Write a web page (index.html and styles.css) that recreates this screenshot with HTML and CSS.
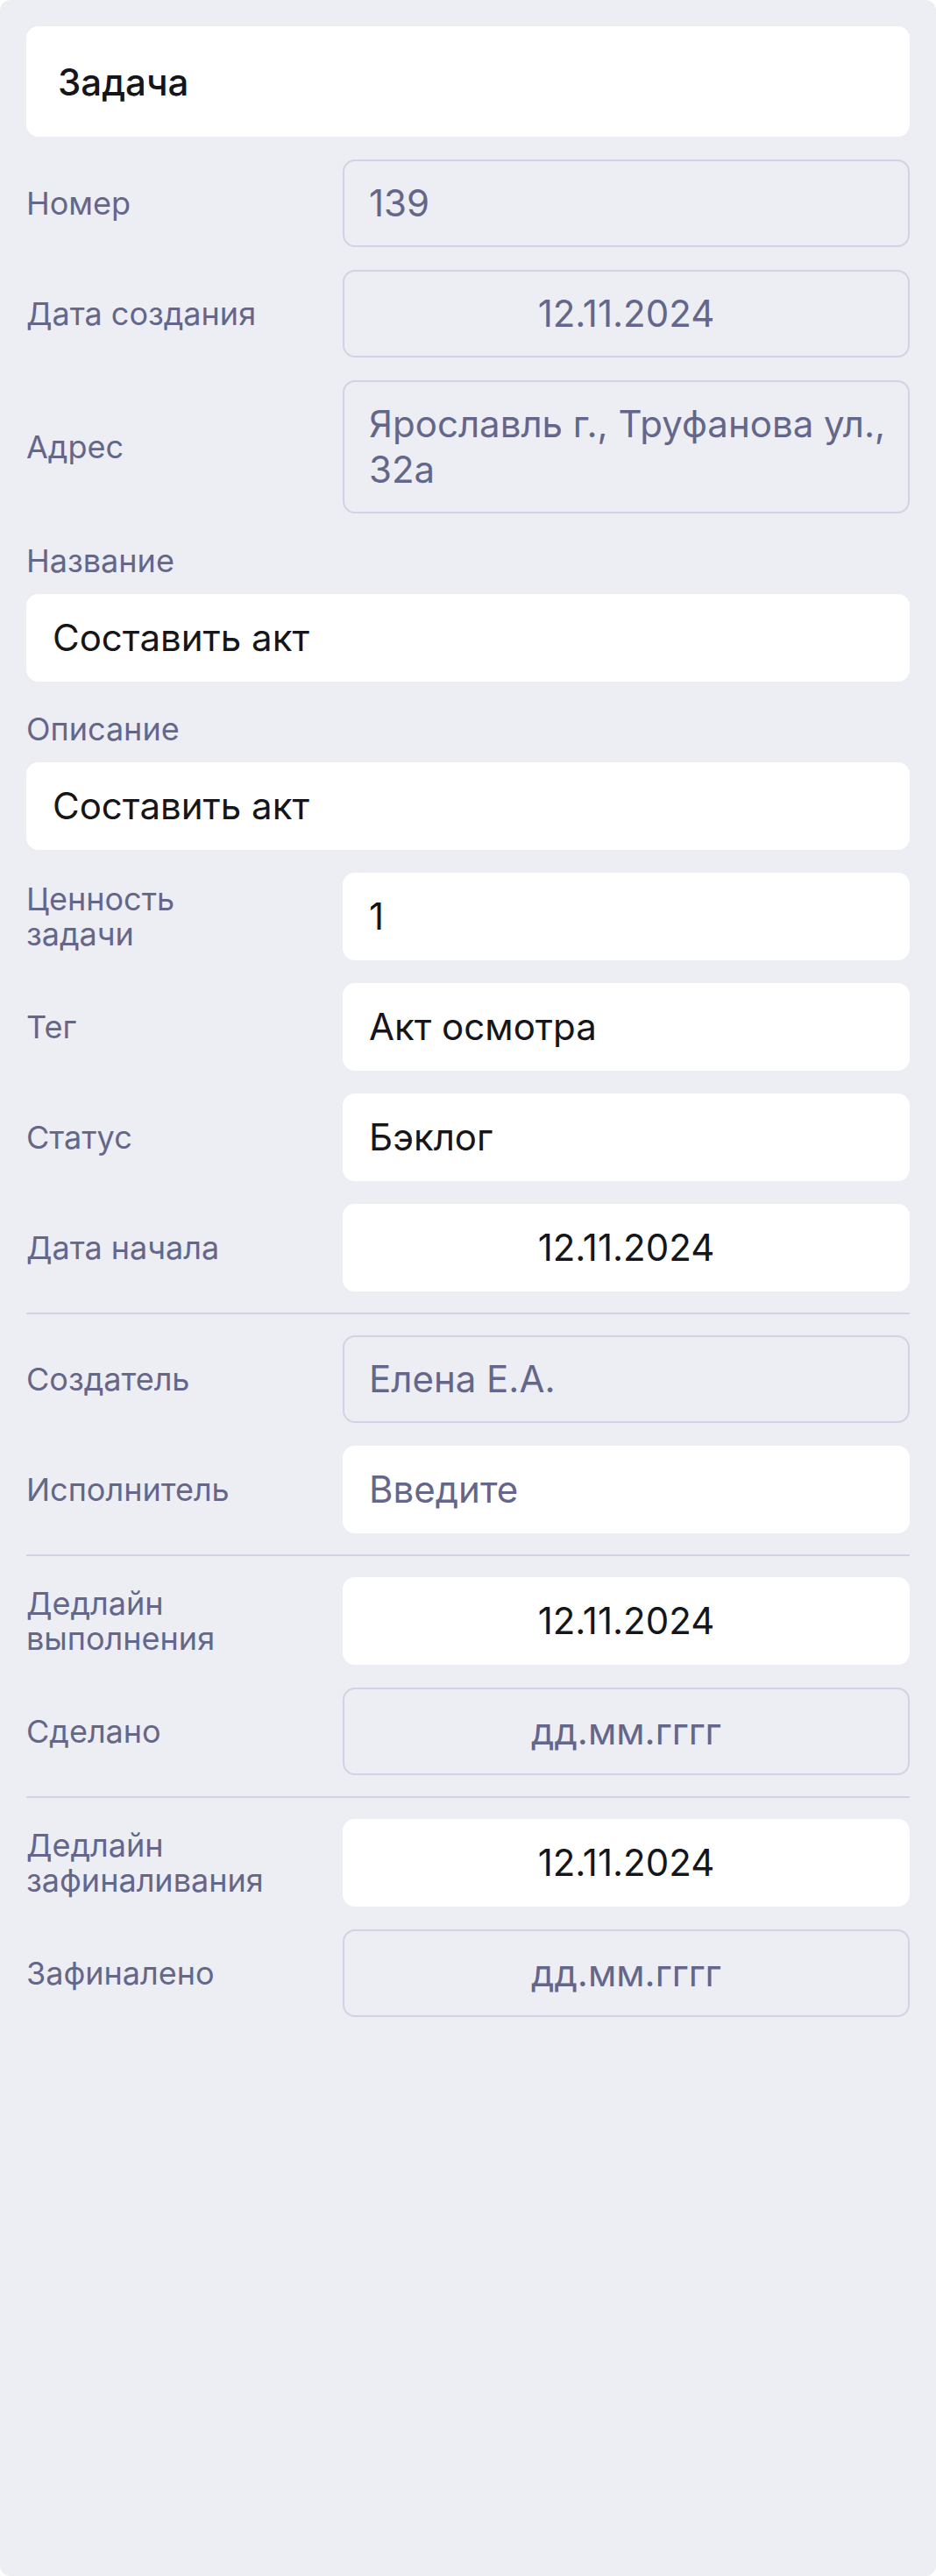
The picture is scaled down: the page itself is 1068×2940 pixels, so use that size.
FILE: index.html
```html
<!DOCTYPE html>
<html lang="ru">
<head>
<meta charset="utf-8">
<title>Задача</title>
<link rel="stylesheet" href="styles.css">
</head>
<body>
<main class="card">
  <div class="title">Задача</div>

  <div class="row">
    <div class="label">Номер</div>
    <div class="field field--disabled">139</div>
  </div>
  <div class="row">
    <div class="label">Дата создания</div>
    <div class="field field--disabled field--center">12.11.2024</div>
  </div>
  <div class="row">
    <div class="label">Адрес</div>
    <div class="field field--disabled">Ярославль г., Труфанова ул., 32а</div>
  </div>

  <div class="stack">
    <div class="label">Название</div>
    <div class="field">Составить акт</div>
  </div>
  <div class="stack">
    <div class="label">Описание</div>
    <div class="field">Составить акт</div>
  </div>

  <div class="row">
    <div class="label">Ценность задачи</div>
    <div class="field">1</div>
  </div>
  <div class="row">
    <div class="label">Тег</div>
    <div class="field">Акт осмотра</div>
  </div>
  <div class="row">
    <div class="label">Статус</div>
    <div class="field">Бэклог</div>
  </div>
  <div class="row">
    <div class="label">Дата начала</div>
    <div class="field field--center">12.11.2024</div>
  </div>

  <hr class="divider">

  <div class="row">
    <div class="label">Создатель</div>
    <div class="field field--disabled">Елена Е.А.</div>
  </div>
  <div class="row">
    <div class="label">Исполнитель</div>
    <div class="field field--placeholder">Введите</div>
  </div>

  <hr class="divider">

  <div class="row">
    <div class="label">Дедлайн выполнения</div>
    <div class="field field--center">12.11.2024</div>
  </div>
  <div class="row">
    <div class="label">Сделано</div>
    <div class="field field--disabled field--center">дд.мм.гггг</div>
  </div>

  <hr class="divider">

  <div class="row">
    <div class="label">Дедлайн зафиналивания</div>
    <div class="field field--center">12.11.2024</div>
  </div>
  <div class="row">
    <div class="label">Зафиналено</div>
    <div class="field field--disabled field--center">дд.мм.гггг</div>
  </div>
</main>
</body>
</html>
```

FILE: styles.css
```css
* {
  box-sizing: border-box;
}

html, body {
  margin: 0;
  padding: 0;
  background: #ffffff;
}

body {
  font-family: Inter, "Noto Sans", "Liberation Sans", sans-serif;
  color: #16161a;
}

.card {
  width: 1068px;
  min-height: 2940px;
  background: #edeef3;
  border-radius: 12px;
  padding: 30px;
  display: flex;
  flex-direction: column;
  gap: 26px;
}

.title {
  background: #ffffff;
  border-radius: 14px;
  height: 126px;
  display: flex;
  align-items: center;
  padding: 0 36px;
  font-size: 42px;
  font-weight: 500;
  color: #16161a;
}

.row {
  display: grid;
  grid-template-columns: 361px 1fr;
  align-items: center;
}

.stack {
  display: flex;
  flex-direction: column;
  gap: 18px;
  margin-top: 8px;
}

.label {
  font-size: 36px;
  line-height: 40px;
  color: #64668a;
  max-width: 280px;
}

.field {
  min-height: 100px;
  background: #ffffff;
  border: 2px solid transparent;
  border-radius: 14px;
  padding: 22px 12px 22px 28px;
  font-size: 42px;
  line-height: 52px;
  color: #16161a;
}

.field--disabled {
  background: #edeef3;
  border-color: #d2d2e4;
  color: #64668a;
}

.field--placeholder {
  color: #64668a;
}

.field--center {
  text-align: center;
  padding-left: 20px;
  padding-right: 20px;
}

.divider {
  border: 0;
  height: 2px;
  background: #d2d2e4;
  margin: -2px 0;
}
```
